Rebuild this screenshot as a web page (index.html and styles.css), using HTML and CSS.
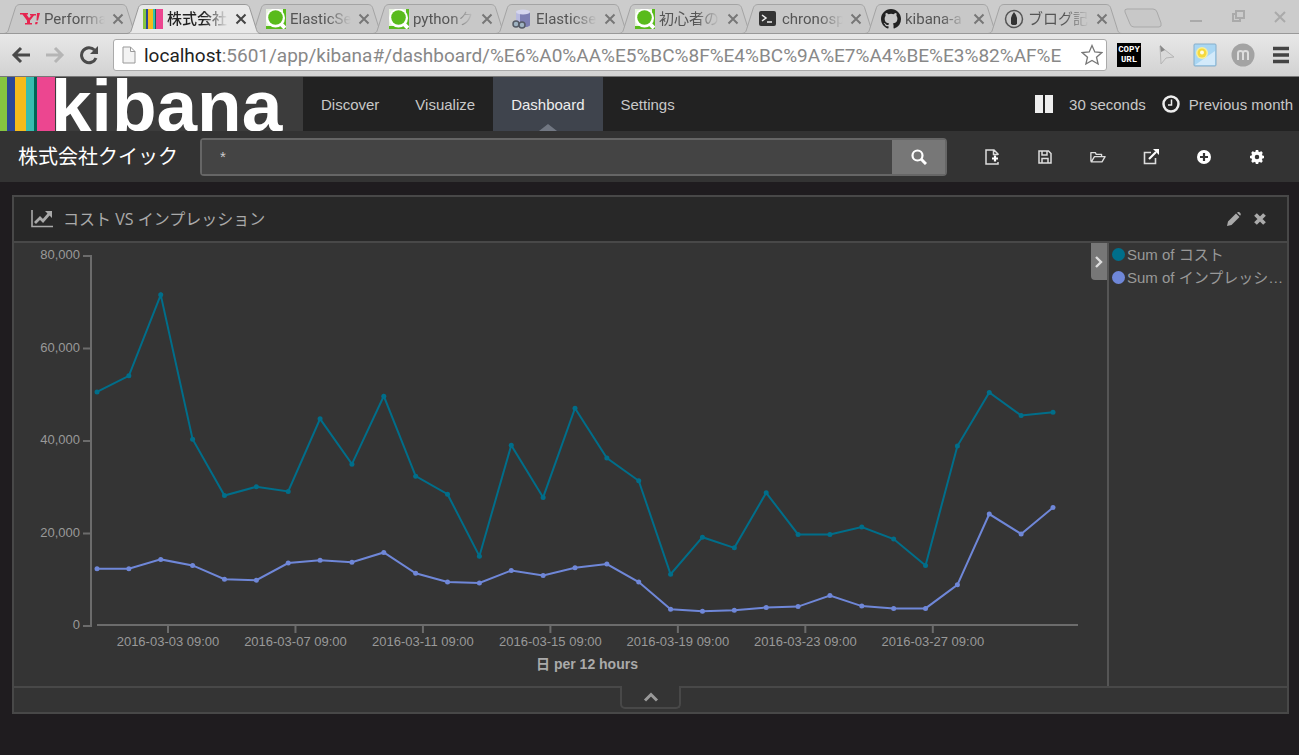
FILE: index.html
```html
<!DOCTYPE html>
<html lang="ja">
<head>
    <meta charset="UTF-8">
    <meta name="viewport" content="width=device-width, initial-scale=1.0">
    <title>株式会社クイック - Kibana</title>
    <link rel="stylesheet" href="styles.css">
</head>
<body>

    <!-- shared icons -->
    <svg class="sprite">
        <symbol id="tab-shape" viewBox="0 0 134 30" preserveAspectRatio="none">
            <path d="M0 29.5C4 29 4 27 5 24L11 5C12 1 14 .5 17 .5H117C120 .5 122 1 123 5L129 24C130 28 131 29.5 134 29.5"/>
        </symbol>
        <symbol id="close" viewBox="0 0 12 12">
            <path d="M1.5 1.5l9 9M10.5 1.5l-9 9" stroke="currentColor" stroke-width="2" fill="none"/>
        </symbol>
        <symbol id="qiita" viewBox="0 0 20 20">
            <rect width="20" height="20" fill="#59bb1c"/>
            <path d="M0 0h17v17H0z" fill="#e8f3e0"/>
            <circle cx="9.500" cy="9" r="9.500" fill="#fff"/>
            <path d="M13 13l6 6" stroke="#fff" stroke-width="4"/>
            <circle cx="9.500" cy="8.500" r="7.300" fill="#59bb1c"/>
        </symbol>
    </svg>

    <div class="tab-strip">
        <ul class="tabs">
            <li class="tab">
                <svg class="tab-bg"><use href="#tab-shape"/></svg>
                <svg class="favicon" viewBox="0 0 20 20" fill="#e5254f">
                    <path d="M0 4h8v1.500H6.500L9 9l2.500-2.500H10V5h6v1.500h-2L10 11.500V14h2v1.500H5V14h2v-2.500L2.500 5.500H0zM17 4h3l-2 7.500h-1.500zM15.500 13h2.300l-.6 2.300H15z"/>
                </svg>
                <span class="tab-title">Performa</span>
                <button class="tab-close" aria-label="Close"><svg><use href="#close"/></svg></button>
            </li>
            <li class="tab active">
                <svg class="tab-bg"><use href="#tab-shape"/></svg>
                <svg class="favicon" viewBox="0 0 20 20">
                    <path fill="#86c540" d="M0 0h3v20H0z"/><path fill="#2b4796" d="M3 0h2v20H3z"/>
                    <path fill="#f5bb1b" d="M5 0h5v20H5z"/><path fill="#36bdb1" d="M10 0h2v20h-2z"/>
                    <path fill="#17645c" d="M12 0h1v20h-1z"/><path fill="#ec4690" d="M13 0h7v20h-7z"/>
                </svg>
                <span class="tab-title">株式会社</span>
                <button class="tab-close" aria-label="Close"><svg><use href="#close"/></svg></button>
            </li>
            <li class="tab">
                <svg class="tab-bg"><use href="#tab-shape"/></svg>
                <svg class="favicon"><use href="#qiita"/></svg>
                <span class="tab-title">ElasticSe</span>
                <button class="tab-close" aria-label="Close"><svg><use href="#close"/></svg></button>
            </li>
            <li class="tab">
                <svg class="tab-bg"><use href="#tab-shape"/></svg>
                <svg class="favicon"><use href="#qiita"/></svg>
                <span class="tab-title">pythonク</span>
                <button class="tab-close" aria-label="Close"><svg><use href="#close"/></svg></button>
            </li>
            <li class="tab">
                <svg class="tab-bg"><use href="#tab-shape"/></svg>
                <svg class="favicon" viewBox="0 0 20 20">
                    <path d="M4 3v13c0 3 14 3 14 0V3z" fill="#7d7fb3"/>
                    <path d="M4 3v13c0 1 2 2 4 2V4z" fill="#b9bbe0"/>
                    <ellipse cx="11" cy="3" rx="7" ry="2.500" fill="#d5d6ee"/>
                    <circle cx="4" cy="15" r="3" fill="#9fb3c2" stroke="#555b66" stroke-width="1.500"/>
                    <circle cx="10" cy="16" r="3" fill="#9fb3c2" stroke="#555b66" stroke-width="1.500"/>
                </svg>
                <span class="tab-title">Elasticse</span>
                <button class="tab-close" aria-label="Close"><svg><use href="#close"/></svg></button>
            </li>
            <li class="tab">
                <svg class="tab-bg"><use href="#tab-shape"/></svg>
                <svg class="favicon"><use href="#qiita"/></svg>
                <span class="tab-title">初心者の</span>
                <button class="tab-close" aria-label="Close"><svg><use href="#close"/></svg></button>
            </li>
            <li class="tab">
                <svg class="tab-bg"><use href="#tab-shape"/></svg>
                <svg class="favicon" viewBox="0 0 20 20">
                    <rect x="1" y="2" width="17" height="15" rx="2" fill="#333"/>
                    <path d="M4 6l4 3-4 3M9 13h5" stroke="#eee" stroke-width="1.500" fill="none"/>
                </svg>
                <span class="tab-title">chronosp</span>
                <button class="tab-close" aria-label="Close"><svg><use href="#close"/></svg></button>
            </li>
            <li class="tab">
                <svg class="tab-bg"><use href="#tab-shape"/></svg>
                <svg class="favicon" viewBox="0 0 16 16">
                    <path fill="#222" d="M8 0C3.580 0 0 3.580 0 8c0 3.540 2.290 6.530 5.470 7.590.4.070.55-.17.55-.38v-1.490c-2.010.37-2.530-.49-2.690-.94-.09-.23-.48-.94-.82-1.130-.28-.15-.68-.52-.01-.53.63-.01 1.080.58 1.230.82.72 1.210 1.870.87 2.330.66.070-.52.28-.87.51-1.070-1.780-.2-3.640-.89-3.640-3.950 0-.87.31-1.590.82-2.150-.08-.2-.36-1.020.08-2.120 0 0 .67-.21 2.200.82a7.600 7.600 0 0 1 4 0c1.530-1.040 2.200-.82 2.200-.82.44 1.100.16 1.920.08 2.120.51.56.82 1.270.82 2.150 0 3.070-1.870 3.750-3.650 3.950.29.25.54.73.54 1.480v2.200c0 .21.15.46.55.38A8 8 0 0 0 16 8c0-4.420-3.580-8-8-8z"/>
                </svg>
                <span class="tab-title">kibana-a</span>
                <button class="tab-close" aria-label="Close"><svg><use href="#close"/></svg></button>
            </li>
            <li class="tab">
                <svg class="tab-bg"><use href="#tab-shape"/></svg>
                <svg class="favicon" viewBox="0 0 20 20">
                    <circle cx="10" cy="10" r="8.500" fill="none" stroke="#555" stroke-width="1.500"/>
                    <path d="M10 3l2 3 1 3v6l-1.500 1h-3L7 15V9l1-3z" fill="#333"/>
                </svg>
                <span class="tab-title">ブログ記</span>
                <button class="tab-close" aria-label="Close"><svg><use href="#close"/></svg></button>
            </li>
        </ul>
        <button class="new-tab" aria-label="New tab">
            <svg viewBox="0 0 40 20"><path d="M4 1h26q3 0 4 3l4 11q1 4-2 4H11q-3 0-4-3L2 4Q1 1 4 1z" fill="#c8c8c8" stroke="#a9a9a9"/></svg>
        </button>
        <div class="window-controls">
            <button aria-label="Minimize"><svg viewBox="0 0 14 14"><path d="M1 12h12"/></svg></button>
            <button aria-label="Restore"><svg viewBox="0 0 14 14"><path d="M5 2h8v7H5zM5 5H2v7h7V9"/></svg></button>
            <button aria-label="Close window"><svg viewBox="0 0 14 14"><path d="M2 3l10 10M12 3L2 13"/></svg></button>
        </div>
    </div>

    <div class="toolbar">
        <button class="tool" aria-label="Back">
            <svg viewBox="0 0 20 20"><path d="M19 10H3M10 3l-7 7 7 7" stroke="#4a4a4a" stroke-width="3" fill="none"/></svg>
        </button>
        <button class="tool" aria-label="Forward">
            <svg viewBox="0 0 20 20"><path d="M1 10h16M10 3l7 7-7 7" stroke="#b5b5b5" stroke-width="3" fill="none"/></svg>
        </button>
        <button class="tool" aria-label="Reload">
            <svg viewBox="0 0 20 20"><path d="M15.500 5A7.500 7.500 0 1 0 17 13" stroke="#4a4a4a" stroke-width="3" fill="none"/><path d="M19 1v8h-8z" fill="#4a4a4a"/></svg>
        </button>
        <div class="omnibox">
            <svg class="page-icon" viewBox="0 0 14 18"><path d="M1 1h7.500L13 5.500V17H1zM8.500 1v4.500H13" fill="#f3f3f3" stroke="#999"/></svg>
            <label class="url-host" for="url">localhost</label>
            <input class="url" id="url" type="text" value=":5601/app/kibana#/dashboard/%E6%A0%AA%E5%BC%8F%E4%BC%9A%E7%A4%BE%E3%82%AF%E">
            <svg class="star" viewBox="0 0 22 22"><path d="M11 1.500l2.800 6.400 7 .7-5.300 4.600 1.600 6.800-6.100-3.600L4.900 20l1.600-6.800L1.200 8.600l7-.7z" fill="#fff" stroke="#777" stroke-width="1.300"/></svg>
        </div>
        <div class="extensions">
            <button class="copy-url">COPY<br>URL</button>
            <button aria-label="Pointer"><svg viewBox="0 0 24 24"><path d="M5 3l14 11-8 1-5 6z" fill="#d9d9d9" stroke="#b5b5b5"/><path d="M5 2l5 5-4 2z" fill="#888"/></svg></button>
            <button aria-label="Weather"><svg viewBox="0 0 24 24"><rect x="1" y="1" width="22" height="22" rx="1" fill="#a9d6f3" stroke="#86aeca"/><path d="M2 22L22 8v14z" fill="#d3eafa"/><circle cx="9" cy="10" r="6" fill="#f8ef9a"/><circle cx="9" cy="10" r="4.500" fill="#f5d93c"/><circle cx="9" cy="9.500" r="2" fill="#fffbe0"/></svg></button>
            <button aria-label="Mail"><svg viewBox="0 0 24 24"><circle cx="12" cy="12" r="11.500" fill="#a3a3a3"/><path d="M7 17V10q0-2 2.500-2T12 10v7V10q0-2 2.500-2T17 10v7" fill="none" stroke="#ddd" stroke-width="2"/></svg></button>
            <button aria-label="Menu"><svg viewBox="0 0 24 24"><path d="M4 5.500h16M4 12h16M4 18.500h16" stroke="#444" stroke-width="3.500"/></svg></button>
        </div>
    </div>

    <nav class="navbar">
        <a class="logo" href="#">
            <svg class="logo-bars" viewBox="0 0 55 54" preserveAspectRatio="none">
                <path fill="#86c540" d="M0 0h7v54H0z"/><path fill="#2b4796" d="M7 0h8v54H7z"/>
                <path fill="#f5bb1b" d="M15 0h11v54H15z"/><path fill="#36bdb1" d="M26 0h8v54h-8z"/>
                <path fill="#006656" d="M34 0h3v54h-3z"/><path fill="#ec4690" d="M37 0h18v54H37z"/>
            </svg>
            <span class="logo-text">kibana</span>
        </a>
        <a class="nav-link" href="#discover">Discover</a>
        <a class="nav-link" href="#visualize">Visualize</a>
        <a class="nav-link current" href="#dashboard">Dashboard</a>
        <a class="nav-link" href="#settings">Settings</a>
        <div class="timepicker">
            <button aria-label="Pause"><svg viewBox="0 0 18 18"><path d="M0 0h8v18H0zM10 0h8v18h-8z" fill="#eee"/></svg></button>
            <a class="refresh" href="#refresh">30 seconds</a>
            <a class="range" href="#range">
                <svg viewBox="0 0 18 18"><circle cx="9" cy="9" r="7.500" fill="none" stroke="#eee" stroke-width="2.500"/><path d="M9.500 4.500V10H6" fill="none" stroke="#eee" stroke-width="1.500"/></svg>
                Previous month
            </a>
        </div>
    </nav>

    <div class="dashboard-bar">
        <h1>株式会社クイック</h1>
        <form class="search">
            <input type="text" value="*" aria-label="Filter">
            <button type="button" aria-label="Search">
                <svg viewBox="0 0 16 16"><circle cx="6.500" cy="6.500" r="5" fill="none" stroke="#fff" stroke-width="2.200"/><path d="M10 10l5 5" stroke="#fff" stroke-width="3"/></svg>
            </button>
        </form>
        <div class="actions">
            <button aria-label="New Dashboard"><svg viewBox="0 0 16 16"><path d="M14 6V5l-4-4H2v14h12v-2M9.500 1v4.500H14" fill="none" stroke="#ddd" stroke-width="1.500"/><path d="M11 6.500v6M8 9.500h6" stroke="#fff" stroke-width="2.200"/></svg></button>
            <button aria-label="Save Dashboard"><svg viewBox="0 0 16 16"><path d="M2 2h9.500L14 4.500V14H2zM5 14V9.500h6V14M5 2v4h5V2" fill="none" stroke="#ddd" stroke-width="1.500"/></svg></button>
            <button aria-label="Load Saved Dashboard"><svg viewBox="0 0 18 16"><path d="M1 13V3h5l1 2h6v2.500M1.500 13.500L5 7.500h12l-3.500 6z" fill="none" stroke="#ddd" stroke-width="1.500" stroke-linejoin="round"/></svg></button>
            <button aria-label="Share"><svg viewBox="0 0 16 16"><path d="M8 3.500H1.500v11h11V9" fill="none" stroke="#ddd" stroke-width="1.600"/><path d="M6 10l7-7" stroke="#fff" stroke-width="2.200"/><path d="M10 0h6v6z" fill="#fff"/></svg></button>
            <button aria-label="Add Visualization"><svg viewBox="0 0 16 16"><circle cx="8" cy="8" r="7" fill="#fff"/><path d="M8 4v8M4 8h8" stroke="#333" stroke-width="2.200"/></svg></button>
            <button aria-label="Options"><svg viewBox="0 0 16 16"><circle cx="8" cy="8" r="4" fill="none" stroke="#fff" stroke-width="3.500"/><path d="M8 1v2M8 13v2M1 8h2M13 8h2M3 3l1.500 1.500M11.500 11.500L13 13M3 13l1.500-1.500M11.500 4.500L13 3" stroke="#fff" stroke-width="2.600"/></svg></button>
        </div>
    </div>

    <main class="panel">
        <div class="panel-header">
            <svg class="panel-icon" viewBox="0 0 22 18"><path d="M1 0v16.500h21" fill="none" stroke="#aaa" stroke-width="1.600"/><path d="M4 13l5-5 3 3 6-7" fill="none" stroke="#aaa" stroke-width="2.800"/><path d="M14 1h7v7z" fill="#aaa"/></svg>
            <h2>コスト VS インプレッション</h2>
            <button aria-label="Edit"><svg viewBox="0 0 14 14"><path d="M0 14l1-4.500L9 1.500 12.500 5l-8 8zM10 .7l1-.7q1-.3 2 .8t.7 2l-.6.900z" fill="#aaa"/></svg></button>
            <button aria-label="Remove"><svg viewBox="0 0 14 14"><path d="M2.500 2.500l9 9M11.500 2.500l-9 9" stroke="#aaa" stroke-width="3.800"/></svg></button>
        </div>
        <div class="panel-body">
            <svg class="chart" id="chart" viewBox="0 0 1077 443"></svg>
            <button class="legend-toggle" aria-label="Toggle legend"><svg viewBox="0 0 10 12"><path d="M2 1l5 5-5 5" fill="none" stroke="#ddd" stroke-width="2.400"/></svg></button>
            <ul class="legend">
                <li><span class="dot cost"></span><span class="legend-label">Sum of コスト</span></li>
                <li><span class="dot impression"></span><span class="legend-label">Sum of インプレッション</span></li>
            </ul>
        </div>
        <div class="panel-footer">
            <button aria-label="Show table"><svg viewBox="0 0 16 10"><path d="M2 8.500l6-6 6 6" fill="none" stroke="#999" stroke-width="3"/></svg></button>
        </div>
    </main>

    <script src="script.js"></script>
</body>
</html>
```

FILE: styles.css
```css
* {
    box-sizing: border-box;
}
body {
    margin: 0;
    min-height: 100vh;
    background-color: #1f1c1f;
    color: #c8c8c8;
    font-family: "Liberation Sans", "Noto Sans CJK JP", sans-serif;
    font-size: 15px;
}
button {
    display: flex;
    align-items: center;
    justify-content: center;
    padding: 0;
    border: none;
    background: none;
    cursor: pointer;
}
a {
    color: inherit;
    text-decoration: none;
}
ul {
    list-style: none;
    margin: 0;
    padding: 0;
}
.sprite {
    display: none;
}

/* browser tabs */
.tab-strip {
    display: flex;
    height: 33px;
    padding: 4px 12px 0 4px;
    background-color: #cccccc;
    font-family: Roboto, "Noto Sans CJK JP", sans-serif;
}
.tabs {
    display: flex;
    min-width: 0;
}
.tab {
    position: relative;
    display: flex;
    align-items: center;
    flex: 0 1 123px;
    width: 123px;
    min-width: 0;
    height: 30px;
    padding-left: 16px;
    color: #555;
}
.tab-bg {
    position: absolute;
    left: 0;
    top: 0;
    width: calc(100% + 11px);
    height: 30px;
    fill: #c8c8c8;
    stroke: #a4a4a4;
}
.tab.active {
    z-index: 1;
    color: #222;
    font-weight: 500;
}
.active .tab-bg {
    fill: #e8e8e8;
    stroke: #999;
}
.favicon {
    position: relative;
    flex: none;
    width: 20px;
    height: 20px;
    margin-right: 4px;
}
.tab-title {
    position: relative;
    width: 61px;
    overflow: hidden;
    white-space: nowrap;
    line-height: 22px;
    -webkit-mask-image: linear-gradient(to right, #000 60%, transparent);
    mask-image: linear-gradient(to right, #000 60%, transparent);
}
.tab-close {
    position: relative;
    margin-left: 7px;
    color: #777;
}
.active .tab-close {
    color: #444;
}
.tab-close svg {
    width: 12px;
    height: 12px;
}
.new-tab {
    width: 40px;
    height: 28px;
    margin-left: 12px;
}
.new-tab svg {
    width: 40px;
    height: 20px;
}
.window-controls {
    display: flex;
    gap: 28px;
    height: 24px;
    margin-left: auto;
}
.window-controls svg {
    width: 14px;
    height: 14px;
    fill: none;
    stroke: #aaa;
    stroke-width: 2;
}

/* browser toolbar */
.toolbar {
    position: relative;
    display: flex;
    align-items: center;
    gap: 14px;
    height: 44px;
    padding: 0 6px 0 11px;
    border-top: 1px solid #999;
    border-bottom: 1px solid #777;
    background: linear-gradient(#e8e8e8, #d2d2d2);
}
.tool svg {
    width: 20px;
    height: 20px;
}
.omnibox {
    display: flex;
    align-items: center;
    flex: 1;
    min-width: 0;
    height: 32px;
    padding: 0 3px 0 8px;
    border: 1px solid #aaa;
    border-radius: 3px;
    background-color: #fff;
    font-family: Roboto, sans-serif;
    font-size: 19px;
}
.page-icon {
    width: 14px;
    height: 18px;
    margin-right: 8px;
}
.url-host {
    color: #222;
}
.url {
    flex: 1;
    min-width: 0;
    padding: 0;
    border: none;
    outline: none;
    background: none;
    color: #888;
    font: inherit;
}
.star {
    width: 22px;
    height: 22px;
}
.extensions {
    display: flex;
    align-items: center;
    gap: 14px;
    margin-left: -4px;
}
.extensions svg {
    width: 24px;
    height: 24px;
}
.copy-url {
    display: block;
    width: 24px;
    height: 24px;
    background-color: #000;
    color: #fff;
    font: bold 9px/10px "Liberation Mono", monospace;
    text-align: center;
}

/* kibana navbar */
.navbar {
    display: flex;
    height: 54px;
    background-color: #222;
}
.logo {
    display: flex;
    width: 303px;
    height: 54px;
    overflow: hidden;
    background-color: #3c3c3c;
}
.logo-bars {
    flex: none;
    width: 55px;
    height: 54px;
    margin-right: -4px;
}
.logo-text {
    color: #fff;
    font-size: 73px;
    font-weight: bold;
    line-height: 58px;
}
.nav-link {
    display: flex;
    align-items: center;
    padding: 0 18px;
}
.nav-link.current {
    position: relative;
    background-color: #3f444d;
    color: #eee;
}
.nav-link.current::after {
    content: "";
    position: absolute;
    left: 50%;
    bottom: 0;
    margin-left: -9px;
    border: 9px solid transparent;
    border-top: none;
    border-bottom: 7px solid #717782;
}
.timepicker {
    display: flex;
    align-items: center;
    margin-left: auto;
    padding-right: 6px;
    gap: 16px;
}
.timepicker svg {
    width: 18px;
    height: 18px;
}
.range {
    display: flex;
    align-items: center;
    gap: 9px;
}

.dashboard-bar {
    display: flex;
    align-items: center;
    height: 51px;
    padding: 0 34px 0 18px;
    background-color: #333;
}
.dashboard-bar h1 {
    margin: 0 22px 0 0;
    color: #fff;
    font-size: 20px;
    font-weight: 400;
    line-height: 30px;
}
.search {
    display: flex;
    flex: 1;
    height: 38px;
    border: 2px solid #666;
    border-radius: 4px;
}
.search input {
    flex: 1;
    min-width: 0;
    padding: 0 18px;
    border: none;
    background-color: #444;
    color: #ccc;
    font: inherit;
}
.search button {
    width: 53px;
    background-color: #777;
}
.search svg {
    width: 16px;
    height: 16px;
}
.actions {
    display: flex;
    gap: 37px;
    margin-left: 37px;
}
.actions svg {
    width: 16px;
    height: 16px;
}

/* visualization panel */
.panel {
    margin: 13px 10px 0 12px;
    border: 2px solid #484848;
    background-color: #343434;
}
.panel-header {
    display: flex;
    align-items: center;
    gap: 12px;
    height: 46px;
    padding: 0 20px 0 17px;
    border-bottom: 2px solid #484848;
    background-color: #282828;
}
.panel-icon {
    width: 22px;
    height: 18px;
    margin-right: -2px;
}
.panel-header h2 {
    margin: 0 auto 0 0;
    color: #aaa;
    font-family: "Open Sans", "Noto Sans CJK JP", sans-serif;
    font-size: 16px;
    font-weight: 400;
    line-height: 24px;
}
.panel-header button svg {
    width: 14px;
    height: 14px;
}
.panel-body {
    display: flex;
    align-items: flex-start;
}
.chart {
    flex: 1;
    min-width: 0;
}
.legend-toggle {
    width: 16px;
    height: 37px;
    border-radius: 0 0 0 4px;
    background-color: #777;
}
.legend-toggle svg {
    width: 10px;
    height: 12px;
}
.legend {
    align-self: stretch;
    width: 180px;
    padding: 0 2px 0 3px;
    border-left: 2px solid #555;
    color: #999;
}
.legend li {
    display: flex;
    align-items: center;
    gap: 2px;
    height: 23px;
}
.legend-label {
    overflow: hidden;
    text-overflow: ellipsis;
    white-space: nowrap;
    line-height: 23px;
}
.dot {
    flex: none;
    width: 13px;
    height: 13px;
    border-radius: 50%;
}
.dot.cost {
    background-color: #006e8a;
}
.dot.impression {
    background-color: #6f87d8;
}
.panel-footer {
    display: flex;
    height: 26px;
}
.panel-footer::before,
.panel-footer::after {
    content: "";
    flex: 1;
    border-top: 2px solid #484848;
}
.panel-footer button {
    width: 61px;
    height: 23px;
    border: 2px solid #484848;
    border-top: none;
    border-radius: 0 0 5px 5px;
}
.panel-footer svg {
    width: 16px;
    height: 10px;
}

/* chart */
.axis {
    fill: none;
    stroke: #6c6c6c;
    stroke-width: 2;
}
.tick-label {
    fill: #999;
    font-size: 13px;
}
.axis-title {
    fill: #aaa;
    font-size: 14px;
    font-weight: bold;
}
.end {
    text-anchor: end;
}
.middle {
    text-anchor: middle;
}
.line {
    fill: none;
    stroke-width: 2;
}
.line.cost {
    stroke: #006e8a;
}
.line.impression {
    stroke: #6f87d8;
}
.point.cost {
    fill: #006e8a;
}
.point.impression {
    fill: #6f87d8;
}
```

FILE: script.js
```js
const cost = [50600, 54100, 71600, 40400, 28200, 30100, 29100, 44800, 35000, 49700, 32400, 28500, 15100, 39100, 27800, 47100, 36300, 31400, 11200, 19200, 16900, 28800, 19800, 19800, 21400, 18800, 13100, 38900, 50500, 45500, 46200];
const impression = [12400, 12400, 14400, 13100, 10100, 9900, 13600, 14200, 13800, 15900, 11400, 9500, 9300, 12000, 10900, 12600, 13400, 9500, 3600, 3200, 3400, 4000, 4200, 6600, 4300, 3800, 3800, 8900, 24200, 19900, 25600];
const days = ['03', '07', '11', '15', '19', '23', '27'];

const left = 83;
const right = 1039;
const top0 = 13;
const bottom = 383;
const step = (right - left) / (cost.length - 1);

function xPos(i) {
    return left + i * step;
}

function yPos(value) {
    return bottom - value / 80000 * (bottom - top0);
}

function drawLine(values, name) {
    const points = values.map((v, i) => `${xPos(i)},${yPos(v)}`).join(' ');
    const dots = values.map((v, i) => `<circle class="point ${name}" cx="${xPos(i)}" cy="${yPos(v)}" r="2.5"/>`).join('');
    return `<polyline class="line ${name}" points="${points}"/>${dots}`;
}

function drawAxes() {
    let html = `<path class="axis" d="M69 ${top0}H77V${bottom}H69M${left} ${bottom - 1}H1064"/>`;
    for (let v = 0; v <= 80000; v += 20000) {
        html += `<path class="axis" d="M69 ${yPos(v)}H77"/>`;
        html += `<text class="tick-label end" x="66" y="${yPos(v) + 3}">${v.toLocaleString('en-US')}</text>`;
    }
    // one tick every four days
    days.forEach((day, i) => {
        const x = 154 + i * 4 * step;
        html += `<path class="axis" d="M${x} ${bottom}V${bottom + 7}"/>`;
        html += `<text class="tick-label middle" x="${x}" y="${bottom + 20}">2016-03-${day} 09:00</text>`;
    });
    html += `<text class="axis-title middle" x="573" y="${bottom + 43}">日 per 12 hours</text>`;
    return html;
}

document.getElementById('chart').innerHTML = drawAxes() + drawLine(cost, 'cost') + drawLine(impression, 'impression');
```
